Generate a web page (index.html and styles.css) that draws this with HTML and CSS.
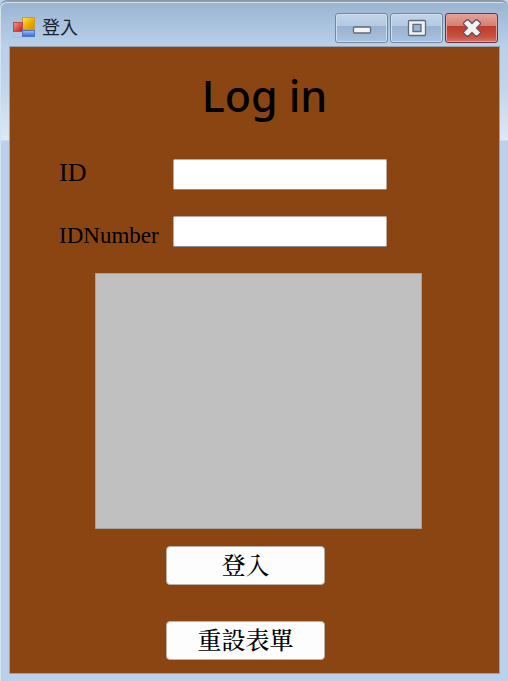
FILE: index.html
```html
<!DOCTYPE html>
<html lang="zh-Hant">
<head>
<meta charset="utf-8">
<meta name="viewport" content="width=device-width, initial-scale=1">
<title>登入</title>
<link rel="stylesheet" href="styles.css">
</head>
<body>
<div class="window">
  <header class="titlebar">
    <svg class="app-icon" width="24" height="24" viewBox="0 0 24 24" aria-hidden="true">
      <defs>
        <linearGradient id="gold" x1="0" y1="0" x2="1" y2="1"><stop offset="0" stop-color="#ffe260"/><stop offset=".5" stop-color="#f0b000"/><stop offset="1" stop-color="#d58c00"/></linearGradient>
        <linearGradient id="red" x1="0" y1="0" x2="1" y2="1"><stop offset="0" stop-color="#f39a8c"/><stop offset="1" stop-color="#bd1717"/></linearGradient>
        <linearGradient id="blue" x1="0" y1="0" x2="0" y2="1"><stop offset="0" stop-color="#9cc2ff"/><stop offset="1" stop-color="#3465d8"/></linearGradient>
      </defs>
      <path d="M0.500 5V0.500H9M0.500 16V20.500H9" fill="none" stroke="#b9bcc4"/>
      <rect x="9.500" y="0.500" width="12" height="12" fill="url(#gold)" stroke="#c59b32"/>
      <rect x="0.500" y="5.500" width="9" height="9" fill="url(#red)" stroke="#b94b48"/>
      <rect x="9.500" y="13.500" width="12" height="6" fill="url(#blue)" stroke="#4e74c4"/>
    </svg>
    <span class="caption">登入</span>
    <div class="controls">
      <button class="control" type="button" aria-label="Minimize">
        <svg width="20" height="18" viewBox="0 0 20 18"><rect x="1.500" y="8" width="17" height="6" rx="1" fill="#f3f3f3" stroke="#626b78" stroke-width="1.300"/></svg>
      </button>
      <button class="control" type="button" aria-label="Maximize">
        <svg width="20" height="18" viewBox="0 0 20 18"><path fill-rule="evenodd" d="M2.500 1.500H17.500Q18.500 1.500 18.500 2.500V15.500Q18.500 16.500 17.500 16.500H2.500Q1.500 16.500 1.500 15.500V2.500Q1.500 1.500 2.500 1.500ZM6 5.500V12.500H14V5.500Z" fill="#f0f1f2" stroke="#5f6b7b" stroke-width="1.300"/></svg>
      </button>
      <button class="control close" type="button" aria-label="Close">
        <svg width="20" height="18" viewBox="0 0 20 18"><path d="M1.500 4L4.500 1H6.500L10 4.500L13.500 1H15.500L18.500 4V5L14.500 9L18.500 13V14L15.500 17H13.500L10 13.500L6.500 17H4.500L1.500 14V13L5.500 9L1.500 5Z" fill="#f1f1f2" stroke="#635565" stroke-width="1.300" stroke-linejoin="round"/></svg>
      </button>
    </div>
  </header>
  <main class="client">
    <h1 class="heading">Log in</h1>
    <form class="form">
      <div class="fields">
        <label class="label label-id" for="id">ID</label>
        <input class="textbox" id="id" type="text">
        <label class="label" for="number">IDNumber</label>
        <input class="textbox" id="number" type="text">
      </div>
      <div class="panel"></div>
      <div class="actions">
        <button class="action" type="submit">登入</button>
        <button class="action" type="reset">重設表單</button>
      </div>
    </form>
  </main>
</div>
</body>
</html>
```

FILE: styles.css
```css
* {
  box-sizing: border-box;
}

body {
  margin: 0;
  background: #b9d1ea;
}

.window {
  display: flex;
  flex-direction: column;
  min-height: 100vh;
  padding: 0 8px 7px 9px;
  border-top: 2px solid #8e9aa7;
  border-radius: 7px 7px 0 0;
  background: linear-gradient(#9ab4d1 0, #b9d1ea 45px, #bdd4ed 80px, #dce9f6 138px, #b9d1ea 139px);
  box-shadow: inset 1px 1px 0 #d5e3f1;
}

.titlebar {
  display: flex;
  align-items: flex-start;
  height: 44px;
  padding: 11px 2px 0 4px;
}

.app-icon {
  flex: none;
  margin-top: 4px;
}

.caption {
  margin-left: 5px;
  font: 400 18px/26px "Noto Sans CJK TC", sans-serif;
  color: #1b222b;
}

.controls {
  display: flex;
  gap: 2px;
  margin-left: auto;
}

.control {
  display: flex;
  align-items: center;
  justify-content: center;
  width: 53px;
  height: 30px;
  padding: 0;
  border: 1px solid #7187a2;
  border-radius: 3px;
  background: linear-gradient(#c2d5e9 0, #b3cae2 42%, #98b2cf 43%, #a9c2dd 100%);
  box-shadow: inset 0 0 0 1px #cfdeee;
}

.close {
  border-color: #6c3446;
  background: linear-gradient(#e4a49b 0, #d47f73 42%, #b83d29 43%, #c8513f 80%, #d77764 100%);
  box-shadow: inset 0 0 0 1px #e5a197;
}

.client {
  flex: 1;
  padding: 20px 10% 12px;
  border: 1px solid #98a1ae;
  background: #8b4512;
}

.heading {
  margin: 0 0 32px 20px;
  font: 500 43px/58px "Noto Sans", sans-serif;
  text-align: center;
  color: #000;
}

.form {
  padding-top: 2px;
}

.fields {
  display: grid;
  grid-template-columns: 114px minmax(0, 214px);
  row-gap: 26px;
}

.label {
  font: 23px/40px "Liberation Serif", serif;
  height: 30px;
  color: #000;
}

.label-id {
  font-size: 26px;
  line-height: 28px;
}

.textbox {
  width: 100%;
  height: 31px;
  padding: 2px 6px;
  border: 1px solid #b9aaa2;
  border-bottom-color: #8d8c90;
  border-radius: 2px;
  background: #fff;
  font: 20px "Liberation Serif", serif;
}

.panel {
  height: 256px;
  margin: 26px 28px 0 36px;
  border: 1px solid #a7a19c;
  background: #c0c0c0;
}

.actions {
  display: flex;
  flex-direction: column;
  align-items: center;
  gap: 36px;
  margin: 17px 18px 0 0;
}

.action {
  width: 159px;
  height: 39px;
  padding: 0;
  border: 1px solid #b9b0aa;
  border-radius: 4px;
  background: #fdfdfd;
  font: 500 24px/34px "Liberation Serif", "Noto Serif CJK TC", "Noto Sans CJK TC", serif;
  color: #000;
}
```
